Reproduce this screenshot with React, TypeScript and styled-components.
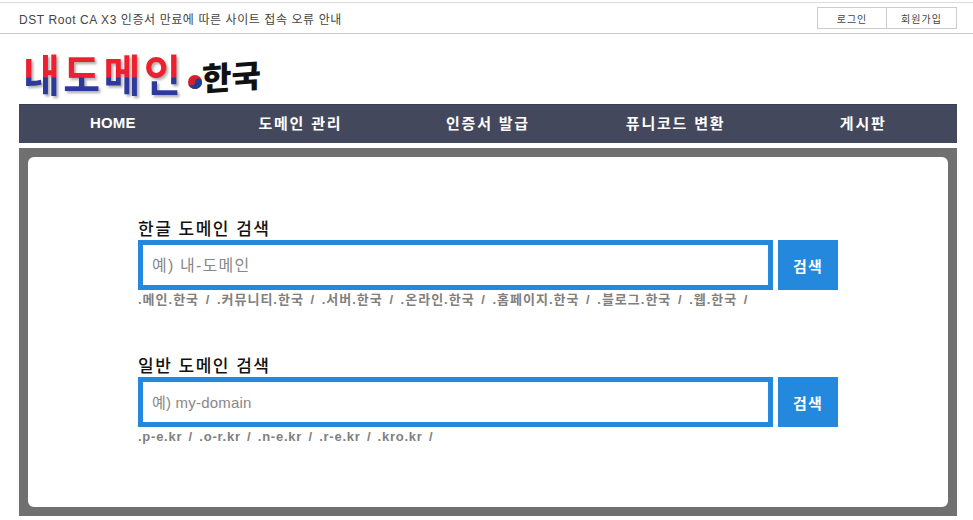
import styled, { createGlobalStyle } from "styled-components";

const GlobalStyle = createGlobalStyle`
  html, body {
    margin: 0;
    padding: 0;
    background: #fff;
    font-family: "Liberation Sans", "Noto Sans CJK KR", sans-serif;
  }
  * { box-sizing: border-box; }
`;

const Page = styled.div`
  width: 973px;
  height: 520px;
  padding-top: 2px;
  overflow: hidden;
`;

// ---------------- Top bar ----------------
const TopBar = styled.div`
  display: flex;
  align-items: center;
  justify-content: space-between;
  height: 32px;
  padding: 0 16px 0 19px;
  border-top: 1px solid #ddd;
  border-bottom: 1px solid #ccc;
`;

const Notice = styled.span`
  font-size: 12px;
  color: #444;
  letter-spacing: 0.58px;
`;

const AuthLinks = styled.div`
  display: flex;
  height: 22px;
  border: 1px solid #ccc;
`;

const AuthLink = styled.a`
  display: flex;
  align-items: center;
  justify-content: center;
  width: 70px;
  font-size: 10px;
  letter-spacing: 1px;
  color: #444;
  &:first-child {
    width: 68px;
  }
  & + & {
    border-left: 1px solid #ccc;
  }
`;

// ---------------- Logo ----------------
const LogoRow = styled.div`
  display: flex;
  align-items: center;
  height: 70px;
  padding: 8px 0 0 23px;
`;

const LogoMain = styled.span`
  font-family: "Noto Sans CJK KR", sans-serif;
  font-size: 40px;
  line-height: 48px;
  font-weight: 700;
  letter-spacing: 3.5px;
  background: linear-gradient(to bottom, #ee2030 0, #ee2030 58%, #2d3a9c 58%, #2d3a9c 100%);
  -webkit-background-clip: text;
  background-clip: text;
  color: transparent;
  filter: drop-shadow(2px 2px 1px rgba(0, 0, 0, 0.3));
  transform: scaleY(1.1);
`;

const LogoDot = styled.svg`
  width: 14px;
  height: 14px;
  margin: 17px 0 0 4px;
  flex: none;
`;

const LogoSuffix = styled.span`
  font-family: "Noto Sans CJK KR", sans-serif;
  font-size: 32px;
  line-height: 36px;
  font-weight: 900;
  color: #111;
  margin: 4px 0 0 0;
  transform: skewY(-4deg);
`;

// ---------------- Nav ----------------
const Nav = styled.nav`
  display: grid;
  grid-template-columns: repeat(5, 1fr);
  width: 938px;
  height: 39px;
  margin-left: 19px;
  padding-bottom: 3px;
  background: #44485c;
  border-top: 1px solid #3a3e50;
`;

const NavItem = styled.a`
  display: flex;
  align-items: center;
  justify-content: center;
  font-size: 15px;
  font-weight: 700;
  letter-spacing: 1.8px;
  color: #fff;
  &:first-child {
    letter-spacing: 0.2px;
  }
`;

// ---------------- Search panel ----------------
const Panel = styled.main`
  width: 938px;
  height: 368px;
  margin: 5px 0 0 19px;
  padding: 9px;
  background: #707070;
`;

const Card = styled.div`
  display: flex;
  flex-direction: column;
  gap: 44px;
  height: 350px;
  padding: 60px 0 0 110px;
  background: #fff;
  border-radius: 6px;
`;

const SearchBlock = styled.section`
  display: flex;
  flex-direction: column;
`;

const SearchTitle = styled.h2`
  margin: 0;
  height: 23px;
  font-size: 17px;
  line-height: 25px;
  font-weight: 500;
  letter-spacing: 1.5px;
  color: #111;
`;

const SearchRow = styled.form`
  display: flex;
  gap: 5px;
  height: 50px;
`;

const SearchInput = styled.input<{ $latin?: boolean }>`
  width: 635px;
  height: 50px;
  padding: ${({ $latin }) => ($latin ? "0 9px" : "2px 9px 0")};
  border: 5px solid #2488dc;
  border-radius: 0;
  outline: none;
  font-family: inherit;
  font-size: ${({ $latin }) => ($latin ? "15px" : "16px")};
  letter-spacing: ${({ $latin }) => ($latin ? "0.2px" : "1.2px")};
  color: #333;
  &::placeholder {
    color: #888;
    opacity: 1;
  }
`;

const SearchButton = styled.button`
  width: 60px;
  height: 50px;
  padding: 0;
  border: 0;
  background: #2488dc;
  color: #fff;
  font-family: inherit;
  font-size: 15px;
  font-weight: 700;
  letter-spacing: 1.2px;
`;

const Suggestions = styled.div<{ $latin?: boolean }>`
  height: 20px;
  font-size: 13px;
  line-height: 20px;
  font-weight: 700;
  letter-spacing: ${({ $latin }) => ($latin ? "0.75px" : "1px")};
  word-spacing: 2px;
  color: #808080;
`;

const navItems = ["HOME", "도메인 관리", "인증서 발급", "퓨니코드 변환", "게시판"];

const searches = [
  {
    title: "한글 도메인 검색",
    placeholder: "예) 내-도메인",
    hints: ".메인.한국 / .커뮤니티.한국 / .서버.한국 / .온라인.한국 / .홈페이지.한국 / .블로그.한국 / .웹.한국 /",
    latin: false,
  },
  {
    title: "일반 도메인 검색",
    placeholder: "예) my-domain",
    hints: ".p-e.kr / .o-r.kr / .n-e.kr / .r-e.kr / .kro.kr /",
    latin: true,
  },
];

export default function App() {
  return (
    <Page>
      <GlobalStyle />
      <TopBar>
        <Notice>DST Root CA X3 인증서 만료에 따른 사이트 접속 오류 안내</Notice>
        <AuthLinks>
          <AuthLink>로그인</AuthLink>
          <AuthLink>회원가입</AuthLink>
        </AuthLinks>
      </TopBar>

      <LogoRow>
        <LogoMain>내도메인</LogoMain>
        <LogoDot viewBox="0 0 20 20">
          <circle cx="10" cy="10" r="10" fill="#d8202c" />
          <path d="M0 10a10 10 0 0 0 20 0a5 5 0 0 0-10 0a5 5 0 0 1-10 0z" fill="#1c3f94" />
        </LogoDot>
        <LogoSuffix>한국</LogoSuffix>
      </LogoRow>

      <Nav>
        {navItems.map((item) => (
          <NavItem key={item}>{item}</NavItem>
        ))}
      </Nav>

      <Panel>
        <Card>
          {searches.map((search) => (
            <SearchBlock key={search.title}>
              <SearchTitle>{search.title}</SearchTitle>
              <SearchRow>
                <SearchInput $latin={search.latin} placeholder={search.placeholder} />
                <SearchButton type="button">검색</SearchButton>
              </SearchRow>
              <Suggestions $latin={search.latin}>{search.hints}</Suggestions>
            </SearchBlock>
          ))}
        </Card>
      </Panel>
    </Page>
  );
}
